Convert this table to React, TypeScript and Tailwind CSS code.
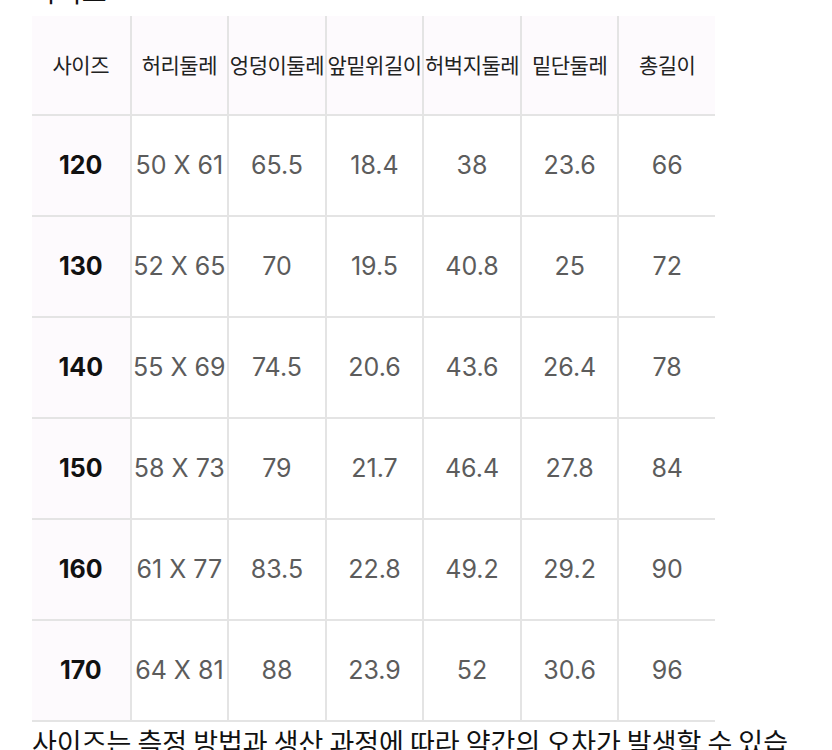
const headers = ['사이즈', '허리둘레', '엉덩이둘레', '앞밑위길이', '허벅지둘레', '밑단둘레', '총길이'];

const rows = [
  ['120', '50 X 61', '65.5', '18.4', '38', '23.6', '66'],
  ['130', '52 X 65', '70', '19.5', '40.8', '25', '72'],
  ['140', '55 X 69', '74.5', '20.6', '43.6', '26.4', '78'],
  ['150', '58 X 73', '79', '21.7', '46.4', '27.8', '84'],
  ['160', '61 X 77', '83.5', '22.8', '49.2', '29.2', '90'],
  ['170', '64 X 81', '88', '23.9', '52', '30.6', '96'],
];

const kr = "font-['Noto_Sans_CJK_KR','Noto_Sans',sans-serif]";
const num = "font-['Inter','Noto_Sans_CJK_KR',sans-serif]";

export default function App() {
  return (
    <div className="w-[832px] h-[750px] overflow-hidden bg-white">
      {/* heading, mostly scrolled off the top */}
      <div className={`${kr} -mt-[24px] ml-[32px] text-[27px] leading-[30px] text-[#111]`}>사이즈</div>

      <div className="mt-[10px] ml-[32px] grid w-[683px] grid-cols-7">
        {headers.map((h, i) => (
          <div
            key={h}
            className={`${kr} flex h-[100px] items-center justify-center whitespace-nowrap border-b-2 border-[#e4e4e4] bg-[#fdfafd] text-[21px] tracking-[-0.5px] text-[#222] ${
              i > 0 ? 'border-l-2' : ''
            }`}
          >
            {h}
          </div>
        ))}
        {rows.map((r) =>
          r.map((c, i) => (
            <div
              key={r[0] + '-' + i}
              className={`${num} flex h-[101px] items-center justify-center whitespace-nowrap border-b-2 border-[#e4e4e4] text-[25px] ${
                i === 0
                  ? 'bg-[#fdfafd] font-bold text-[#111]'
                  : 'border-l-2 bg-white text-[#5c5c5c]'
              }`}
            >
              {c}
            </div>
          ))
        )}
      </div>

      <p className={`${kr} mx-[32px] mt-[4px] text-[27px] leading-[32px] text-[#111]`}>
        사이즈는 측정 방법과 생산 과정에 따라 약간의 오차가 발생할 수 있습니다.
      </p>
    </div>
  );
}
